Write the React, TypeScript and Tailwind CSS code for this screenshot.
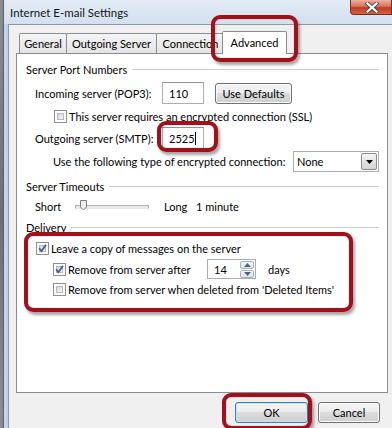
import React from "react";

function Check({ checked }: { checked?: boolean }) {
  return (
    <div className="relative w-[13px] h-[13px] shrink-0 border border-[#8f8f8f] bg-white p-[2px]">
      <div className="w-full h-full border border-[#b4b9bf] bg-[linear-gradient(135deg,#d4d7dc,#f7f7f7)]" />
      {checked && (
        <svg className="absolute left-[-1px] top-[-1px]" width="13" height="13" viewBox="0 0 13 13">
          <path d="M3.2 6.2 L5.4 9.2 L10 2.8" fill="none" stroke="#4a5c94" strokeWidth="1.9" strokeLinejoin="miter" />
        </svg>
      )}
    </div>
  );
}

function GroupHeader({ label }: { label: string }) {
  return (
    <div className="flex items-center h-[15px] pl-[9px] pr-[8px]">
      <span className="whitespace-nowrap">{label}</span>
      <div className="flex-1 h-px bg-[#c9cdd3] ml-[5px]" />
    </div>
  );
}

function Btn({ children, w, def }: { children: React.ReactNode; w: string; def?: boolean }) {
  return (
    <div
      className={
        "h-[21px] rounded-[3px] border flex items-center justify-center bg-[linear-gradient(to_bottom,#f4f4f4_0%,#ececec_45%,#dcdcdc_50%,#cfcfcf_100%)] " +
        (def
          ? "border-[#3c7fb1] shadow-[inset_0_0_0_1px_#bfe8f8]"
          : "border-[#707070] shadow-[inset_0_0_0_1px_#fbfbfb]") +
        " " +
        w
      }
    >
      {children}
    </div>
  );
}

function RedBox({ cls }: { cls: string }) {
  return (
    <div
      className={
        "absolute z-30 rounded-[9px] border-[4px] border-[#a4101a] shadow-[2px_3px_3px_rgba(0,0,0,0.35),inset_0_0_1px_rgba(60,0,0,0.6)] " +
        cls
      }
    />
  );
}

export default function App() {
  return (
    <div className="relative w-[392px] h-[428px] overflow-hidden flex bg-[#6e7275] text-[11px] leading-[15px] text-black font-['Lato','Noto_Sans',sans-serif]">
      <div className="w-[3px] shrink-0 bg-[linear-gradient(to_bottom,#8a8d91,#6b6f73,#8a8d91)]" />
      <div className="flex-1 flex flex-col border-l border-[#55616f] bg-[#c3d7ec]">
        {/* title bar */}
        <div className="relative h-[24px] shrink-0 flex items-center pl-[6px] bg-[linear-gradient(to_bottom,#e3ecf6,#d3e0ee)]">
          <span className="text-[#141414] text-[11.5px] whitespace-nowrap">Internet E-mail Settings</span>
          <div className="absolute right-0 top-0 w-[42px] h-[15px] rounded-bl-[4px] border border-t-0 border-[#7b2a1d] bg-[linear-gradient(to_bottom,#eab0a2_0%,#d8735b_45%,#c4391f_55%,#d4633f_100%)] flex items-center justify-center">
            <svg width="14" height="11" viewBox="0 0 14 11" className="ml-[2px]">
              <path d="M2.5 1.5 L11.5 9.5 M11.5 1.5 L2.5 9.5" stroke="#4a4a4a" strokeWidth="4" strokeLinecap="square" />
              <path d="M2.5 1.5 L11.5 9.5 M11.5 1.5 L2.5 9.5" stroke="#ffffff" strokeWidth="2.2" strokeLinecap="square" />
            </svg>
          </div>
        </div>
        <div className="flex-1 flex">
          <div className="w-[4px] shrink-0 bg-[linear-gradient(to_right,#c6daee,#b7cfe9)]" />
          <div className="flex-1 bg-[#f0f0f0] border-l border-t border-[#8e99a6] pl-[7px] pt-[6px]">
            {/* tabs */}
            <div className="relative z-10 flex items-end h-[23px] ml-[3px]">
              <div className="w-[48px] h-[20px] mb-px border border-b-0 border-[#898c95] rounded-t-[2px] bg-[linear-gradient(to_bottom,#f4f4f4,#e4e4e4)] flex items-center justify-center">
                General
              </div>
              <div className="w-[91px] h-[20px] mb-px -ml-px border border-b-0 border-[#898c95] rounded-t-[2px] bg-[linear-gradient(to_bottom,#f4f4f4,#e4e4e4)] flex items-center justify-center">
                Outgoing Server
              </div>
              <div className="w-[69px] h-[20px] mb-px -ml-px border border-b-0 border-[#898c95] rounded-t-[2px] bg-[linear-gradient(to_bottom,#f4f4f4,#e4e4e4)] flex items-center justify-center">
                Connection
              </div>
              <div className="relative w-[65px] h-[23px] -ml-[3px] border border-b-0 border-[#898c95] rounded-t-[2px] bg-white flex items-center justify-center pb-[2px]">
                Advanced
              </div>
            </div>
            {/* panel */}
            <div className="-mt-px w-[372px] h-[340px] border border-[#898c95] bg-white flex flex-col">
              <div className="mt-[8px]">
                <GroupHeader label="Server Port Numbers" />
              </div>
              <div className="mt-[5px] h-[22px] flex items-center pl-[18px]">
                <span className="w-[127px] whitespace-nowrap">Incoming server (POP3):</span>
                <div className="w-[42px] h-[22px] border border-[#abadb3] border-t-[#8e9197] bg-white flex items-center pl-[6px]">110</div>
                <div className="ml-[11px]">
                  <Btn w="w-[77px]">Use Defaults</Btn>
                </div>
              </div>
              <div className="mt-[6px] h-[13px] flex items-center pl-[37px]">
                <Check />
                <span className="ml-[2px] whitespace-nowrap">This server requires an encrypted connection (SSL)</span>
              </div>
              <div className="mt-[4px] h-[22px] flex items-center pl-[18px]">
                <span className="w-[127px] whitespace-nowrap">Outgoing server (SMTP):</span>
                <div className="w-[42px] h-[22px] border border-[#abadb3] border-t-[#8e9197] bg-white flex items-center pl-[6px]">
                  2525<span className="inline-block w-px h-[13px] bg-black" />
                </div>
              </div>
              <div className="mt-[2px] h-[21px] flex items-center pl-[36px]">
                <span className="w-[240px] whitespace-nowrap">Use the following type of encrypted connection:</span>
                <div className="w-[86px] h-[21px] border border-[#abadb3] bg-white flex items-center justify-between pl-[3px] pr-px">
                  <span>None</span>
                  <div className="w-[16px] h-[17px] border border-[#8b8b8b] rounded-[2px] bg-[linear-gradient(to_bottom,#f5f5f5,#e3e3e3_50%,#d4d4d4)] flex items-center justify-center">
                    <svg width="7" height="4" viewBox="0 0 7 4">
                      <path d="M0 0 H7 L3.5 4 Z" fill="#000" />
                    </svg>
                  </div>
                </div>
              </div>
              <div className="mt-[7px]">
                <GroupHeader label="Server Timeouts" />
              </div>
              <div className="mt-[5px] h-[15px] flex items-center pl-[18px]">
                <span className="w-[40px]">Short</span>
                <div className="relative w-[74px] h-[11px] flex items-center">
                  <div className="w-full h-[4px] border border-[#b3b3b3] border-b-[#e4e4e4] bg-[#e9e9e9]" />
                  <svg className="absolute left-[5px] top-[-1px]" width="7" height="11" viewBox="0 0 7 11">
                    <path d="M0.5 0.5 H6.5 V7 L3.5 10 L0.5 7 Z" fill="#efefef" stroke="#7d7d7d" strokeWidth="1" />
                  </svg>
                </div>
                <span className="ml-[15px] w-[32px]">Long</span>
                <span className="whitespace-nowrap">1 minute</span>
              </div>
              <div className="mt-[6px]">
                <GroupHeader label="Delivery" />
              </div>
              <div className="mt-[7px] h-[13px] flex items-center pl-[19px]">
                <Check checked />
                <span className="ml-[2px] whitespace-nowrap">Leave a copy of messages on the server</span>
              </div>
              <div className="mt-[4px] h-[20px] flex items-center pl-[36px]">
                <Check checked />
                <span className="ml-[2px] w-[139px] whitespace-nowrap">Remove from server after</span>
                <div className="w-[49px] h-[20px] border border-[#abadb3] bg-white flex items-center justify-between pl-[6px] pr-px">
                  <span>14</span>
                  <div className="flex flex-col gap-[1px]">
                    <div className="w-[14px] h-[8px] border border-[#a5b1c2] rounded-[2px] bg-[linear-gradient(to_bottom,#f5f7fa,#dde3eb)] flex items-center justify-center">
                      <svg width="7" height="4" viewBox="0 0 7 4">
                        <path d="M0 4 H7 L3.5 0 Z" fill="#4f6284" />
                      </svg>
                    </div>
                    <div className="w-[14px] h-[8px] border border-[#a5b1c2] rounded-[2px] bg-[linear-gradient(to_bottom,#f5f7fa,#dde3eb)] flex items-center justify-center">
                      <svg width="7" height="4" viewBox="0 0 7 4">
                        <path d="M0 0 H7 L3.5 4 Z" fill="#4f6284" />
                      </svg>
                    </div>
                  </div>
                </div>
                <span className="ml-[12px]">days</span>
              </div>
              <div className="mt-[4px] h-[13px] flex items-center pl-[36px]">
                <Check />
                <span className="ml-[2px] whitespace-nowrap">Remove from server when deleted from 'Deleted Items'</span>
              </div>
            </div>
            {/* buttons */}
            <div className="mt-[9px] w-[372px] flex justify-end gap-[10px] pr-[8px]">
              <Btn w="w-[73px]" def>
                OK
              </Btn>
              <Btn w="w-[62px]">Cancel</Btn>
            </div>
          </div>
        </div>
      </div>
      <RedBox cls="left-[211px] top-[15px] w-[87px] h-[47px]" />
      <RedBox cls="left-[157px] top-[121px] w-[61px] h-[31px]" />
      <RedBox cls="left-[24px] top-[232px] w-[329px] h-[80px]" />
      <RedBox cls="left-[222px] top-[393px] w-[90px] h-[37px]" />
    </div>
  );
}
